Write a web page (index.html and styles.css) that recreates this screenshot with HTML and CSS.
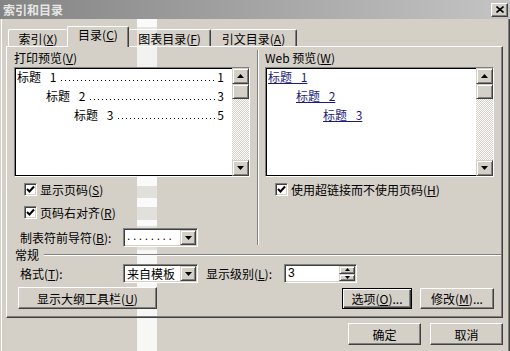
FILE: index.html
```html
<!DOCTYPE html>
<html lang="zh-CN">
<head>
<meta charset="utf-8">
<title>索引和目录</title>
<link rel="stylesheet" href="styles.css">
</head>
<body>
<div class="window">
  <div class="titlebar">
    <span class="title">索引和目录</span>
    <span class="close"><svg width="8" height="7" viewBox="0 0 8 7"><path d="M0.5 0.5 L7.5 6.5 M7.5 0.5 L0.5 6.5" stroke="#000" stroke-width="1.6" fill="none"/></svg></span>
  </div>

  <div class="tabs">
    <div class="tab t1">索引(<u>X</u>)</div>
    <div class="tab t2 active">目录(<u>C</u>)</div>
    <div class="tab t3">图表目录(<u>F</u>)</div>
    <div class="tab t4">引文目录(<u>A</u>)</div>
  </div>

  <div class="panel">
    <div class="columns">
      <div class="col col-left">
        <div class="caption">打印预览(<u>V</u>)</div>
        <div class="listbox lb-left">
          <div class="list-body">
            <div class="toc-row lv1"><span>标题 1</span><span class="leader"></span><span class="pg">1</span></div>
            <div class="toc-row lv2"><span>标题 2</span><span class="leader"></span><span class="pg">3</span></div>
            <div class="toc-row lv3"><span>标题 3</span><span class="leader"></span><span class="pg">5</span></div>
          </div>
          <div class="vscroll">
            <div class="sbtn"><svg width="7" height="4" viewBox="0 0 7 4"><path d="M3.5 0 L7 4 L0 4 Z" fill="#000"/></svg></div>
            <div class="thumb"></div>
            <div class="track"></div>
            <div class="sbtn"><svg width="7" height="4" viewBox="0 0 7 4"><path d="M0 0 L7 0 L3.5 4 Z" fill="#000"/></svg></div>
          </div>
        </div>
        <div class="check chk1"><span class="box"><svg width="9" height="9" viewBox="0 0 9 9"><path d="M1 4 L3.5 6.5 L8 1.5" stroke="#000" stroke-width="2" fill="none"/></svg></span><span>显示页码(<u>S</u>)</span></div>
        <div class="check chk2"><span class="box"><svg width="9" height="9" viewBox="0 0 9 9"><path d="M1 4 L3.5 6.5 L8 1.5" stroke="#000" stroke-width="2" fill="none"/></svg></span><span>页码右对齐(<u>R</u>)</span></div>
        <div class="leader-row">
          <span class="field-label">制表符前导符(<u>B</u>):</span>
          <div class="combo">
            <span class="combo-text dots">........</span>
            <span class="dropbtn"><svg width="7" height="4" viewBox="0 0 7 4"><path d="M0 0 L7 0 L3.5 4 Z" fill="#000"/></svg></span>
          </div>
        </div>
      </div>

      <div class="vsep"></div>

      <div class="col col-right">
        <div class="caption">Web 预览(<u>W</u>)</div>
        <div class="listbox lb-right">
          <div class="list-body">
            <div class="web-row lv1"><span class="link">标题 1</span></div>
            <div class="web-row lv2"><span class="link">标题 2</span></div>
            <div class="web-row lv3"><span class="link">标题 3</span></div>
          </div>
          <div class="vscroll">
            <div class="sbtn"><svg width="7" height="4" viewBox="0 0 7 4"><path d="M3.5 0 L7 4 L0 4 Z" fill="#000"/></svg></div>
            <div class="thumb"></div>
            <div class="track"></div>
            <div class="sbtn"><svg width="7" height="4" viewBox="0 0 7 4"><path d="M0 0 L7 0 L3.5 4 Z" fill="#000"/></svg></div>
          </div>
        </div>
        <div class="check chk1"><span class="box"><svg width="9" height="9" viewBox="0 0 9 9"><path d="M1 4 L3.5 6.5 L8 1.5" stroke="#000" stroke-width="2" fill="none"/></svg></span><span>使用超链接而不使用页码(<u>H</u>)</span></div>
      </div>
    </div>

    <div class="group-head"><span>常规</span><span class="rule"></span></div>

    <div class="format-row">
      <span class="field-label">格式(<u>T</u>):</span>
      <div class="combo">
        <span class="combo-text">来自模板</span>
        <span class="dropbtn"><svg width="7" height="4" viewBox="0 0 7 4"><path d="M0 0 L7 0 L3.5 4 Z" fill="#000"/></svg></span>
      </div>
      <span class="level-label">显示级别(<u>L</u>):</span>
      <div class="spin">
        <span class="spin-text">3</span>
        <span class="spin-btns">
          <span class="spbtn"><svg width="5" height="3" viewBox="0 0 5 3"><path d="M2.5 0 L5 3 L0 3 Z" fill="#000"/></svg></span>
          <span class="spbtn"><svg width="5" height="3" viewBox="0 0 5 3"><path d="M0 0 L5 0 L2.5 3 Z" fill="#000"/></svg></span>
        </span>
      </div>
    </div>

    <div class="button-row">
      <button class="btn btn-outline">显示大纲工具栏(<u>U</u>)</button>
      <span class="spacer"></span>
      <button class="btn btn-default btn-options">选项(<u>O</u>)...</button>
      <button class="btn btn-modify">修改(<u>M</u>)...</button>
    </div>
  </div>

  <div class="footer">
    <button class="btn btn-ok">确定</button>
    <button class="btn btn-cancel">取消</button>
  </div>
</div>
</body>
</html>
```

FILE: styles.css
```css
* {
  box-sizing: border-box;
  margin: 0;
  padding: 0;
}

html, body {
  width: 510px;
  height: 351px;
  overflow: hidden;
}

body {
  font-family: "Noto Sans CJK SC", "Liberation Sans", sans-serif;
  font-size: 12px;
  line-height: 14px;
  color: #000;
  background: #d4d0c8;
}

u {
  text-decoration: underline;
  text-underline-offset: 1px;
}

.window {
  width: 510px;
  height: 351px;
  display: flex;
  flex-direction: column;
  background:
    linear-gradient(to bottom,
      #d4d0c8 0 19px,
      #fafafa 19px 27px,
      #e8e6e1 27px 46px,
      #f2f2f0 46px 177px,
      #fafafa 177px 186px,
      #e2e0da 186px 198px,
      #fafafa 198px 207px,
      #e2e0da 207px 220px,
      #fafafa 220px 226px,
      #e2e0da 226px 250px,
      #f7f7f5 250px 351px) 137px 0 / 20px 351px no-repeat,
    #d4d0c8;
  box-shadow: inset 1px 0 #d4d0c8, inset 2px 0 #fff, inset -1px 0 #404040, inset -2px 0 #808080;
}

/* title bar */
.titlebar {
  height: 19px;
  flex: none;
  display: flex;
  align-items: center;
  padding: 0 3px 0 3px;
  background: linear-gradient(to right, #848484, #c4c4c4);
}

.title {
  flex: 1;
  color: #e6e6e6;
  font-weight: bold;
  font-size: 12px;
  line-height: 14px;
}

.close {
  width: 17px;
  height: 14px;
  display: flex;
  align-items: center;
  justify-content: center;
  background: #d4d0c8;
  border: 1px solid;
  border-color: #fff #404040 #404040 #fff;
  box-shadow: inset -1px -1px #808080;
  margin-right: -1px;
}

/* tabs */
.tabs {
  height: 27px;
  flex: none;
  display: flex;
  align-items: flex-end;
  padding-left: 8px;
  position: relative;
  z-index: 1;
}

.tab {
  height: 17px;
  display: flex;
  align-items: center;
  justify-content: center;
  border-top: 1px solid #fff;
  border-left: 1px solid #fff;
  border-right: 1px solid #404040;
  box-shadow: inset -1px 0 #808080;
  border-radius: 2px 2px 0 0;
  padding-top: 1px;
  white-space: nowrap;
}

.t1 { width: 59px; border-right: none; box-shadow: none; }
.t2 { width: 62px; }
.t3 { width: 82px; border-left: none; }
.t4 { width: 86px; border-left: none; }

.tab.active {
  height: 21px;
  margin-bottom: -1px;
  background: #d4d0c8;
  align-items: flex-start;
  padding-top: 1px;
}

/* panel */
.panel {
  margin-left: 6px;
  width: 497px;
  height: 272px;
  flex: none;
  border: 1px solid;
  border-color: #fff #404040 #404040 #fff;
  box-shadow: inset -1px -1px #808080;
  display: flex;
  flex-direction: column;
}

.columns {
  height: 201px;
  flex: none;
  display: flex;
}

.col {
  display: flex;
  flex-direction: column;
}

.col-left {
  width: 250px;
  padding-left: 7px;
}

.col-right {
  flex: 1;
  padding-left: 6px;
}

.vsep {
  width: 2px;
  margin-top: 3px;
  margin-bottom: 3px;
  border-left: 1px solid #808080;
  border-right: 1px solid #fff;
}

.caption {
  margin-top: 4px;
  height: 14px;
  white-space: nowrap;
}

.listbox {
  margin-top: 2px;
  height: 110px;
  display: flex;
  border: 1px solid;
  border-color: #808080 #fff #fff #808080;
  box-shadow: inset 1px 1px #000, inset -1px -1px #000;
  background: #fff;
  padding: 1px;
}

.lb-left { width: 236px; }
.lb-right { width: 229px; }

.list-body {
  flex: 1;
  display: flex;
  flex-direction: column;
  gap: 4px;
  padding-right: 8px;
}

.toc-row {
  display: flex;
  align-items: baseline;
  line-height: 15px;
  height: 15px;
  white-space: nowrap;
  word-spacing: 6px;
}

.lb-left .lv1 { padding-left: 1px; }
.lb-left .lv2 { padding-left: 30px; }
.lb-left .lv3 { padding-left: 58px; }

.leader {
  flex: 1;
  align-self: stretch;
  margin: 0 2px 0 5px;
  background: linear-gradient(to right, #000 1px, transparent 1px) 0 11px / 4px 1px repeat-x;
}

.pg {
  width: 7px;
  text-align: right;
}

.web-row {
  line-height: 15px;
  height: 15px;
  white-space: nowrap;
  word-spacing: 6px;
}

.lb-right .lv1 { padding-left: 1px; }
.lb-right .lv2 { padding-left: 29px; }
.lb-right .lv3 { padding-left: 56px; }

.link {
  color: #1c1c7a;
  text-decoration: underline;
  text-underline-offset: 1px;
}

/* scrollbar */
.vscroll {
  width: 17px;
  margin: -1px -1px -1px 0;
  display: flex;
  flex-direction: column;
  background: repeating-conic-gradient(#d4d0c8 0 25%, #fff 0 50%) 0 0 / 2px 2px;
}

.sbtn,
.thumb {
  height: 16px;
  flex: none;
  display: flex;
  align-items: center;
  justify-content: center;
  background: #d4d0c8;
  border: 1px solid;
  border-color: #d4d0c8 #404040 #404040 #d4d0c8;
  box-shadow: inset 1px 1px #fff, inset -1px -1px #808080;
}

.thumb { height: 15px; }

.track { flex: 1; }

/* checkboxes */
.check {
  display: flex;
  align-items: center;
  height: 13px;
  margin-left: 10px;
  gap: 3px;
  white-space: nowrap;
}

.chk1 { margin-top: 6px; }
.chk2 { margin-top: 10px; }

.box {
  width: 13px;
  height: 13px;
  flex: none;
  display: flex;
  align-items: center;
  justify-content: center;
  background: #fff;
  border: 1px solid;
  border-color: #808080 #fff #fff #808080;
  box-shadow: inset 1px 1px #404040, inset -1px -1px #d4d0c8;
}

/* combo / fields */
.leader-row,
.format-row {
  display: flex;
  align-items: center;
  height: 19px;
  white-space: nowrap;
}

.leader-row {
  margin-top: 9px;
  padding-left: 6px;
}

.field-label {
  width: 103px;
  flex: none;
}

.combo {
  width: 75px;
  height: 19px;
  flex: none;
  display: flex;
  background: #fff;
  border: 1px solid;
  border-color: #808080 #fff #fff #808080;
  box-shadow: inset 1px 1px #404040, inset -1px -1px #d4d0c8;
  padding: 1px;
}

.combo-text {
  flex: 1;
  padding-left: 2px;
  line-height: 15px;
}

.dots {
  font-family: "Liberation Sans", sans-serif;
  letter-spacing: 2.6px;
  line-height: 13px;
}

.dropbtn {
  width: 16px;
  flex: none;
  display: flex;
  align-items: center;
  justify-content: center;
  background: #d4d0c8;
  border: 1px solid;
  border-color: #d4d0c8 #404040 #404040 #d4d0c8;
  box-shadow: inset 1px 1px #fff, inset -1px -1px #808080;
}

/* group header */
.group-head {
  height: 13px;
  display: flex;
  align-items: center;
  padding-left: 8px;
  padding-right: 1px;
  gap: 5px;
}

.rule {
  flex: 1;
  height: 2px;
  border-top: 1px solid #808080;
  border-bottom: 1px solid #fff;
  margin-top: 1px;
}

.format-row {
  margin-top: 3px;
  padding-left: 13px;
}

.level-label {
  margin-left: 8px;
  width: 78px;
  flex: none;
}

.spin {
  width: 73px;
  height: 19px;
  flex: none;
  display: flex;
  background: #fff;
  border: 1px solid;
  border-color: #808080 #fff #fff #808080;
  box-shadow: inset 1px 1px #404040, inset -1px -1px #d4d0c8;
  padding: 1px;
}

.spin-text {
  flex: 1;
  padding-left: 2px;
  line-height: 15px;
  font-family: "Liberation Sans", sans-serif;
}

.spin-btns {
  width: 16px;
  flex: none;
  display: flex;
  flex-direction: column;
}

.spbtn {
  flex: 1;
  display: flex;
  align-items: center;
  justify-content: center;
  background: #d4d0c8;
  border: 1px solid;
  border-color: #d4d0c8 #404040 #404040 #d4d0c8;
  box-shadow: inset 1px 1px #fff, inset -1px -1px #808080;
}

/* buttons */
.btn {
  font: inherit;
  color: #000;
  height: 22px;
  display: flex;
  align-items: center;
  justify-content: center;
  background: #d4d0c8;
  border: 1px solid;
  border-color: #fff #404040 #404040 #fff;
  box-shadow: inset -1px -1px #808080;
  white-space: nowrap;
  padding: 1px 0 0;
}

.btn-default {
  border-color: #000;
  box-shadow: inset 1px 1px #fff, inset -1px -1px #404040, inset -2px -2px #808080;
}

.button-row {
  display: flex;
  align-items: center;
  margin-top: 4px;
  padding-left: 11px;
  padding-right: 8px;
}

.btn-outline { width: 139px; }
.spacer { flex: 1; }
.btn-options { width: 70px; height: 21px; }
.btn-modify { width: 74px; height: 21px; margin-left: 8px; }

.footer {
  display: flex;
  justify-content: flex-end;
  gap: 9px;
  margin-top: 5px;
  padding-right: 7px;
}

.btn-ok,
.btn-cancel {
  width: 73px;
}
```
